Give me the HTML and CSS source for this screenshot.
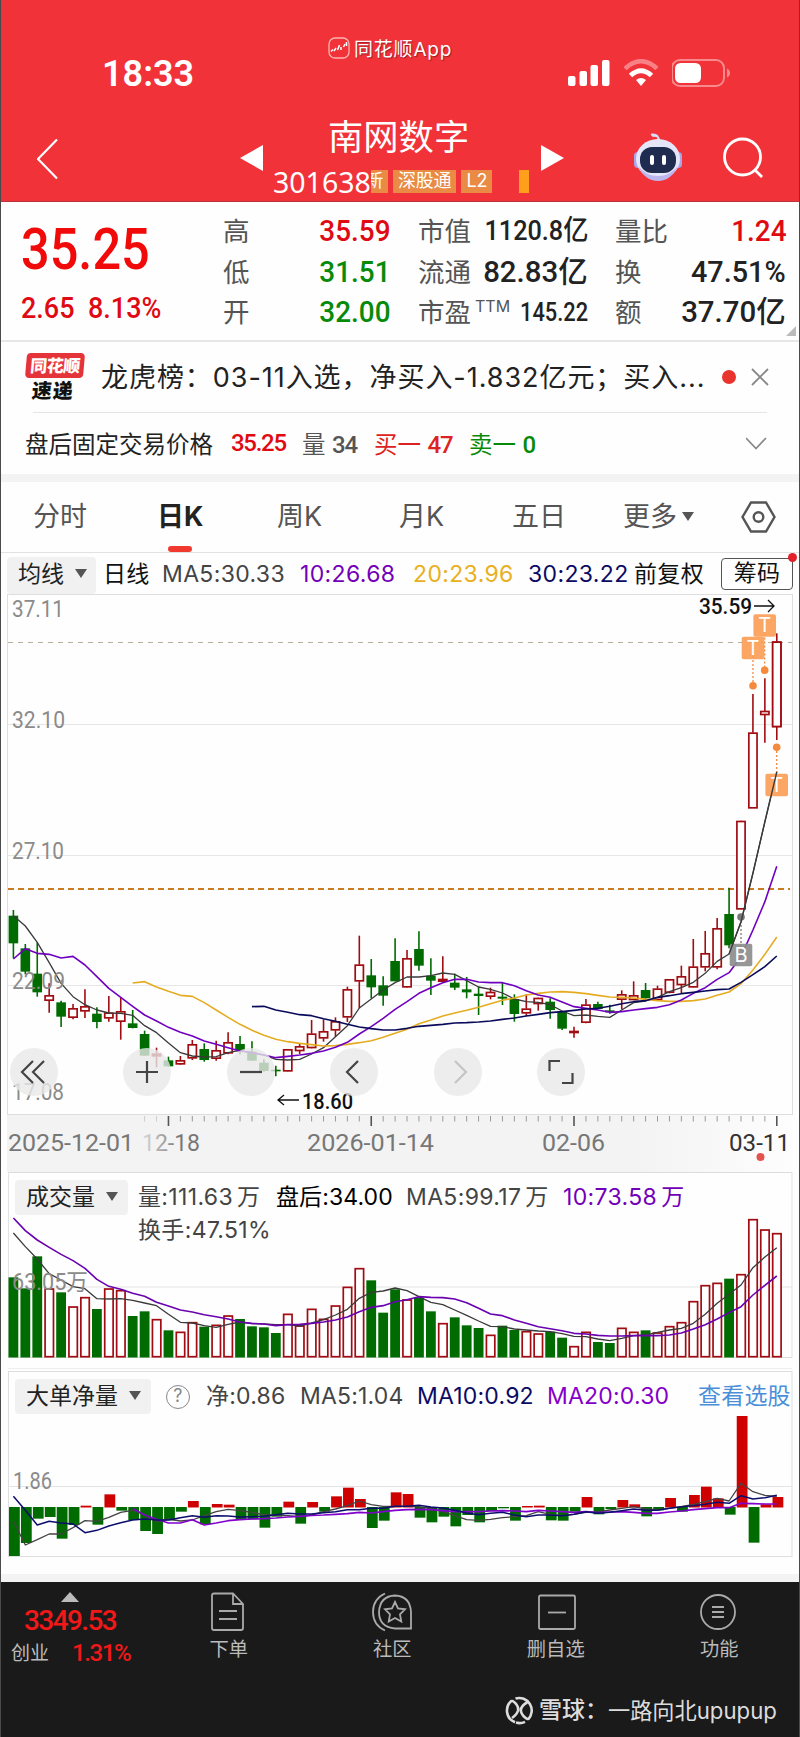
FILE: index.html
```html
<!DOCTYPE html>
<html lang="zh-CN">
<head>
<meta charset="utf-8">
<title>南网数字 301638</title>
<link rel="stylesheet" href="styles.css">
</head>
<body>
<div class="screen">
  <header class="top">
    <div class="status">
      <span class="clock">18:33</span>
      <span class="app">
        <svg width="22" height="22" viewBox="0 0 22 22" fill="none" stroke="#fff"><rect x="1" y="1" width="20" height="20" rx="6" stroke="#ffb3b0" stroke-width="1.3"/><path d="M3 14.500l2-2M6 14l2-3M9.500 13l2-5M13 13v-3M15.500 10l1.500-3M18.500 9V5" stroke-width="1.500"/></svg>
        <span>同花顺App</span>
      </span>
      <span class="signals">
        <svg width="44" height="28" viewBox="0 0 44 28" fill="#fff"><rect x="0" y="17" width="7.500" height="10" rx="2"/><rect x="11.500" y="12" width="7.500" height="15" rx="2"/><rect x="22.500" y="6" width="7.500" height="21" rx="2"/><rect x="34" y="1" width="7.500" height="26" rx="2"/></svg>
        <svg width="36" height="28" viewBox="0 0 36 28" fill="none"><path d="M1 9.500Q17 -5 33 9.500" stroke="#f98084" stroke-width="4.500"/><path d="M6.500 16.500Q17 7 27.500 16.500" stroke="#fff" stroke-width="5"/><path d="M17 27l-5-6q5-4 10 0z" fill="#fff"/></svg>
        <svg width="60" height="28" viewBox="0 0 60 28"><rect x="0" y="1" width="52" height="26" rx="8" fill="none" stroke="#f88a8d" stroke-width="2"/><rect x="3" y="4" width="26" height="20" rx="5.500" fill="#fff"/><path d="M55 9.500q3 1.500 3 4.500t-3 4.500z" fill="#f88a8d"/></svg>
      </span>
    </div>
    <div class="nav">
      <svg width="24" height="42" viewBox="0 0 24 42" fill="none" stroke="#fff" stroke-width="2.200"><path d="M20 1.500L1 21l19 19.500"/></svg>
      <svg class="prev" width="24" height="26" viewBox="0 0 24 26"><path d="M0 13L23 0v26z" fill="#fff"/></svg>
      <div class="name">
        <h1>南网数字</h1>
        <div class="code"><span class="num">301638</span><span class="tag cut"><i>新</i></span><span class="tag">深股通</span><span class="tag">L2</span><span class="tag mark"></span></div>
      </div>
      <svg class="next" width="24" height="26" viewBox="0 0 24 26"><path d="M23 13L0 0v26z" fill="#fff"/></svg>
      <svg class="bot" width="50" height="48" viewBox="0 0 50 48"><path d="M24 8Q26 3 20 4q-4-3-1-3.500 7-1 8 7" fill="#d9dcf6"/><rect x="1" y="19" width="8" height="16" rx="4" fill="#a9a5ea"/><rect x="41" y="19" width="8" height="16" rx="4" fill="#a9a5ea"/><ellipse cx="25" cy="26" rx="22" ry="20" fill="#e6e6fb"/><path d="M5 33q7 15 20 15t20-15q-8 10-20 10T5 33" fill="#bdb5ee"/><rect x="7" y="14" width="36" height="26" rx="12" fill="#202b50"/><rect x="17" y="22" width="4" height="10" rx="2" fill="#fff"/><rect x="29" y="22" width="4" height="10" rx="2" fill="#fff"/></svg>
      <svg class="find" width="42" height="42" viewBox="0 0 42 42" fill="none" stroke="#fff" stroke-width="2.800"><circle cx="20.500" cy="20" r="18"/><path d="M33 33l7 7"/></svg>
    </div>
  </header>

  <section class="quote">
    <div class="price">
      <b class="din big red">35.25</b>
      <div class="change red"><span class="din">2.65</span><span class="din">8.13%</span></div>
    </div>
    <dl>
      <dt>高</dt><dd class="red"><span class="din">35.59</span></dd>
      <dt>低</dt><dd class="green"><span class="din">31.51</span></dd>
      <dt>开</dt><dd class="green"><span class="din">32.00</span></dd>
    </dl>
    <dl class="mid">
      <dt>市值</dt><dd><span class="din s1">1120.8亿</span></dd>
      <dt>流通</dt><dd><span class="din s2">82.83亿</span></dd>
      <dt>市盈<sup>TTM</sup></dt><dd><span class="din s3">145.22</span></dd>
    </dl>
    <dl class="last">
      <dt>量比</dt><dd class="red"><span class="din">1.24</span></dd>
      <dt>换</dt><dd><span class="din s4">47.51%</span></dd>
      <dt>额</dt><dd><span class="din s2">37.70亿</span></dd>
    </dl>
    <i class="corner"></i>
  </section>

  <section class="news">
    <div class="logo"><b>同花顺</b><strong>速递</strong></div>
    <p>龙虎榜：03-11入选，净买入-1.832亿元；买入...</p>
    <i class="dot"></i>
    <svg width="18" height="18" viewBox="0 0 18 18" stroke="#888" stroke-width="1.800"><path d="M1 1l16 16M17 1L1 17"/></svg>
  </section>
  <section class="after">
    <span>盘后固定交易价格</span><span class="red n">35.25</span><span class="gray">量 <em class="n">34</em></span><span class="red2">买一 <em class="n">47</em></span><span class="green">卖一 <em class="n">0</em></span>
    <svg width="22" height="14" viewBox="0 0 22 14" fill="none" stroke="#888" stroke-width="1.700"><path d="M0 2l10 10.500L20 2"/></svg>
  </section>

  <nav class="tabs">
    <span>分时</span><span class="on">日K</span><span>周K</span><span>月K</span><span>五日</span><span>更多<i class="tri"></i></span>
    <svg width="36" height="32" viewBox="0 0 36 32" fill="none" stroke="#555" stroke-width="2.400"><path d="M10 1.500h15L33.500 16 25 30.500H10L1.500 16z"/><circle cx="17.500" cy="16" r="4.800"/></svg>
  </nav>

  <section class="ma">
    <span class="drop">均线<i class="tri"></i></span><span class="black">日线</span><span>MA5:30.33</span><span class="purple">10:26.68</span><span class="gold">20:23.96</span><span class="navy">30:23.22</span><span class="black">前复权</span><span class="chip">筹码<i></i></span>
  </section>

  <section class="kchart">
    <svg id="k" width="798" height="578" viewBox="1 594 798 578"></svg>
    <div class="tools">
      <button><svg viewBox="0 0 48 48"><path d="M23 13L12 24l11 11M34 13L23 24l11 11"/></svg></button>
      <button><svg viewBox="0 0 48 48"><path d="M13 24h22M24 13v22"/></svg></button>
      <button><svg viewBox="0 0 48 48"><path d="M13 24h22"/></svg></button>
      <button><svg viewBox="0 0 48 48"><path d="M28 13L17 24l11 11"/></svg></button>
      <button class="off"><svg viewBox="0 0 48 48"><path d="M21 13l11 11-11 11"/></svg></button>
      <button><svg viewBox="0 0 48 48"><path d="M12.500 23V13H23M25 35h10.500V25"/></svg></button>
    </div>
  </section>

  <section class="vol">
    <div class="head">
      <span class="drop">成交量<i class="tri"></i></span><span>量:111.63<i class="unit">万</i></span><span class="black">盘后:34.00</span><span>MA5:99.17<i class="unit">万</i></span><span class="purple">10:73.58<i class="unit">万</i></span><span class="turn">换手:47.51%</span>
    </div>
    <svg id="v" width="798" height="199" viewBox="1 1172 798 199"></svg>
  </section>

  <section class="net">
    <div class="head">
      <span class="drop">大单净量<i class="tri"></i></span><span class="help">?</span><span>净:0.86</span><span>MA5:1.04</span><span class="navy">MA10:0.92</span><span class="violet">MA20:0.30</span><span class="link">查看选股</span>
    </div>
    <svg id="n" width="798" height="211" viewBox="1 1371 798 211"></svg>
  </section>

  <footer>
    <div class="menu">
      <div class="index">
        <i class="up"></i>
        <span class="pts">3349.53</span>
        <div><span>创业</span><span class="pct">1.31%</span></div>
      </div>
      <div class="item"><svg width="40" height="40" viewBox="0 0 40 40"><path d="M3 3.500q0-2 2-2h19l10 10.500v24q0 2-2 2H5q-2 0-2-2zM24 1.500V12h10M10 19h18M10 27h18"/></svg>下单</div>
      <div class="item"><svg width="42" height="40" viewBox="0 0 42 40"><path d="M14 1.500Q2 7 2 20t12 18.500M40 36.500H24Q8 35 8 20 9 4 24 3.500q15 .5 16 16.500zM24 10l3 6.500 7 .8-5 5 1.300 7.200-6.300-3.500-6.300 3.500 1.300-7.200-5-5 7-.8z"/></svg>社区</div>
      <div class="item"><svg width="40" height="40" viewBox="0 0 40 40"><rect x="3" y="3.500" width="36" height="33.500" rx="1.500"/><path d="M12 20.500h18"/></svg>删自选</div>
      <div class="item"><svg width="38" height="40" viewBox="0 0 38 40"><circle cx="18" cy="20" r="17"/><path d="M12 15h12M12 20h12M12 25h12"/></svg>功能</div>
    </div>
    <div class="credit">
      <svg width="29" height="29" viewBox="0 0 29 29" fill="none" stroke="#ddd" stroke-width="2.600"><path d="M10 26.300A12.600 12.600 0 0 1 7 4.500M10.500 2.500A12.600 12.600 0 0 1 23 23.500M20 25.800a12.600 12.600 0 0 1-9 .8M7 4.500q7 4.500 6 10-1 4-6 7.500M22 6.500q-7 4-6 9 1 4.500 7 8"/></svg>
      <span>雪球：</span><span class="user">一路向北upupup</span>
    </div>
  </footer>
</div>
<script src="chart.js"></script>
</body>
</html>
```
FILE: styles.css
```css
* { box-sizing: border-box; }
body { margin: 0; background: #fff; font-family: Inter, "Noto Sans CJK SC", sans-serif; color: #444; }
.screen { width: 800px; height: 1737px; border: solid #4a4a4a; border-width: 0 1px; background: #fefefe; white-space: nowrap; overflow: hidden; }
svg { display: block; flex: none; }
i, em { font-style: normal; }
.red { color: #e00a12; }
.green { color: #078a07; }
.purple { color: #7200b8; }
.violet { color: #8400c8; }
.gold { color: #e8b020; }
.navy { color: #0b0b64; }
.black { color: #111; }

.top { height: 202px; background: #f13239; color: #fff; border-bottom: 1px solid #b8323a; }
.status { display: grid; grid-template-columns: 327px 240px 1fr; height: 104px; padding-top: 37px; }
.clock { font: 600 36px/42px Roboto, sans-serif; padding: 16px 0 0 101px; }
.app { display: flex; gap: 4px; font-size: 19px; letter-spacing: .8px; line-height: 26px; align-items: flex-start; text-shadow: 1px 1px 1px #9c1c22; }
.signals { display: flex; gap: 12px; padding-top: 22px; }
.nav { display: grid; grid-template-columns: 203px 33px 268px 92px 89px 1fr; padding: 15px 0 0 36px; align-items: start; }
.nav > svg { margin-top: 19px; }
.nav > .prev, .nav > .next { margin-top: 26px; }
.nav > .bot { margin-top: 14px; }
.nav > .find { margin-top: 18px; }
h1 { margin: -3px 0 0; font: 400 35.300px/38px "Noto Sans CJK SC", sans-serif; padding-left: 55px; }
.code { display: flex; align-items: center; gap: 5px; height: 27px; margin-top: 14px; }
.num { font: 400 28.500px/26px "Noto Sans", sans-serif; width: 93px; }
.tag { height: 23px; line-height: 22px; font-size: 18px; padding: 0 5px; background: #e98b45; letter-spacing: -.2px; }
.cut { width: 17px; padding: 0; overflow: hidden; display: flex; justify-content: flex-end; padding-right: 5px; }
.mark { width: 10px; padding: 0; margin-left: 22px; background: #ffa01c; }

.quote { position: relative; display: grid; grid-template-columns: 222px 168px 197px 1fr; height: 140px; border-bottom: 2px solid #e7e7e7; padding-right: 13px; }
.din { display: inline-block; font: 500 30px/40px Roboto, "Noto Sans CJK SC", sans-serif; transform: scaleX(.93); transform-origin: right; }
.price { padding: 17px 0 0 20px; }
.price .din { transform-origin: left; }
.price .big { display: block; font-size: 58px; line-height: 60px; transform: scaleX(.87); color: #f00a0a; }
.change { display: grid; grid-template-columns: 67px 1fr; }
.change .din { font-size: 29px; transform: scaleX(.93); line-height: 60px; margin-top: -1px; }
dl { margin: 0; padding-top: 9px; display: grid; grid-template-columns: 0 1fr; grid-auto-rows: 40.5px; }
dt { font-size: 26.500px; line-height: 40px; color: #555; }
dd { margin: 0; text-align: right; }
.mid { margin-left: 27px; }
.last { margin-left: 27px; }
.mid dd, .last dd:not(.red) { color: #222; }
.quote .s1 { font-size: 28px; transform: scaleX(.9); }
.quote .s2 { font-size: 30px; transform: scaleX(.98); }
.quote .s3 { font-size: 26px; transform: scaleX(.84); }
.quote .s4 { transform: scaleX(.96); }
sup { font-size: 16px; line-height: 10px; vertical-align: 10px; margin-left: 4px; font-weight: 400; }
.corner { position: absolute; right: 3px; bottom: 4px; border-left: 10px solid transparent; border-bottom: 10px solid #bbb; }

.news { display: grid; grid-template-columns: 76px 621px 24px 1fr; align-items: center; height: 70px; margin-left: 24px; }
.news svg { margin-left: 5px; }
.logo { width: 58px; transform: skewX(-5deg); text-align: center; color: #111; }
.logo b { display: block; height: 25px; background: #e4343a; color: #fff; border-radius: 4px; font: 900 17px/24px "Noto Sans CJK SC", sans-serif; letter-spacing: -.5px; }
.logo strong { display: block; font: 900 20px/23px "Noto Sans CJK SC", sans-serif; letter-spacing: 1px; }
.news p { margin: -3px 0 0; font-size: 27px; color: #222; letter-spacing: .95px; }
.dot { width: 14px; height: 14px; border-radius: 50%; background: #e8342c; }
.after { display: grid; grid-template-columns: 206px 71px 72px 95px 277px 1fr; align-items: center; height: 62px; margin-left: 24px; font-size: 23.500px; color: #222; position: relative; }
.after::before { content: ""; position: absolute; left: 8px; right: 32px; top: 0; height: 1px; background: #e4e4e4; }
.red2 { color: #d22; }
.gray { color: #555; }
.after .n { font: 500 24px Roboto, sans-serif; letter-spacing: -1.300px; }

.tabs { display: grid; grid-template-columns: 124px 120px 122px 113px 111px 118px 1fr; height: 79px; padding: 8px 0 0 32px; border-top: 8px solid #f3f3f3; border-bottom: 1px solid #e2e2e2; font-size: 27px; line-height: 53px; color: #555; }
.tabs svg { margin-top: 11px; }
.on { position: relative; color: #222; font-weight: 700; }
.on::after { content: ""; position: absolute; left: 11px; top: 56px; width: 24px; height: 6px; border-radius: 3px; background: #f03a30; }
.tri { display: inline-block; border: 6.500px solid transparent; border-top: 9px solid #555; border-bottom: 0; margin-left: 5px; vertical-align: 5px; }
.ma { display: grid; grid-template-columns: 96px 59px 138px 113px 115px 106px 87px 72px; height: 41px; padding: 4px 0 0 6px; font-size: 23px; line-height: 34px; letter-spacing: .35px; }
.ma .gold, .ma .navy, .ma .purple { margin-left: 0; }
.drop { display: inline-block; background: #f1f1f1; border-radius: 4px; color: #222; padding-left: 11px; }
.ma .drop { width: 89px; letter-spacing: 0; }
.drop .tri { margin-left: 11px; vertical-align: 4px; }
.chip { position: relative; border: 1.500px solid #555; border-radius: 4px; height: 32px; line-height: 28px; margin-top: 1px; text-align: center; color: #111; }
.chip i { position: absolute; right: -5px; top: -6px; width: 9px; height: 9px; border-radius: 50%; background: #e0202a; }

.kchart { position: relative; height: 578px; }
.tools { position: absolute; left: 9px; top: 454px; display: flex; gap: 55.400px; }
.tools button { width: 48px; height: 48px; padding: 0; border: 0; border-radius: 50%; background: rgba(232,232,232,.8); }
.tools button:first-child { margin-right: 10px; }
.tools path { fill: none; stroke: #444; stroke-width: 2.200; }
.tools .off path { stroke: #c4c4c4; }

.vol, .net { position: relative; }
.vol { height: 199px; }
.net { height: 211px; }
.head { position: absolute; left: 14px; top: 8px; display: grid; line-height: 35px; font-size: 23px; }
.vol .head { grid-template-columns: 123px 138px 130px 157px 1fr; grid-auto-rows: 35px 29px; letter-spacing: .35px; }
.vol .drop { width: 113px; letter-spacing: 0; }
.vol .black { letter-spacing: .1px; color: #000; }
.unit { margin-left: 4px; }
.turn { grid-column: 2; line-height: 31px; }
.net .head { grid-template-columns: 151px 40px 94px 117px 130px 151px 1fr; letter-spacing: .2px; }
.net .drop { width: 136px; letter-spacing: 0; }
.help { width: 24px; height: 24px; margin-top: 6px; border: 1.600px solid #888; border-radius: 50%; font-size: 18px; line-height: 20px; text-align: center; color: #888; }
.link { color: #4a8fd8; }

footer { height: 156px; background: #1a1a1a; color: #bbb; }
.menu { display: grid; grid-template-columns: 146px repeat(4, 163.500px); height: 100px; padding-top: 10px; }
.index { display: flex; flex-direction: column; padding-left: 10px; }
.up { width: 0; border: 9px solid transparent; border-top: 0; border-bottom: 10px solid #bbb; margin-left: 50px; }
.pts { font: 500 28px/38px Roboto, sans-serif; color: #f01818; padding-left: 13px; letter-spacing: -1.600px; }
.index div { display: grid; grid-template-columns: 61px 1fr; font-size: 19px; line-height: 28px; }
.pct { font: 500 24px/27px Roboto, sans-serif; color: #f01818; letter-spacing: -1.400px; }
.item { display: flex; flex-direction: column; align-items: center; gap: 3px; font-size: 19.300px; line-height: 28px; }
.item svg { fill: none; stroke: #aaa; stroke-width: 1.800; }
.credit { display: grid; grid-template-columns: 34px 69px 1fr; align-items: center; padding: 14px 0 0 504px; color: #ddd; font-size: 23px; line-height: 29px; }
.credit span { font-weight: 500; }
.credit .user { font-weight: 400; font-size: 22.200px; }
```
FILE: chart.js
```js
const STEP = 11.928, X0 = 13.4;
const GREEN = '#006b00', RED = '#a00c12';
const cx = i => X0 + STEP * i;

// Values are stored in thirds of a pixel, each block with its own origin.
const px = (v, base) => base + v / 3;

const rect = (x, y, w, h, fill, stroke) =>
  `<rect x="${x}" y="${y}" width="${w}" height="${h}" fill="${fill}"${stroke ? ` stroke="${stroke}" stroke-width="1.700"` : ''}/>`;
const seg = (x1, y1, x2, y2, c, w = 1, dash = '') =>
  `<path d="M${x1} ${y1}L${x2} ${y2}" stroke="${c}" stroke-width="${w}" stroke-dasharray="${dash}" fill="none"/>`;
const line = (start, ys, color, w = 1.4) =>
  `<polyline points="${ys.map((y, k) => cx(start + k) + ',' + y).join(' ')}" fill="none" stroke="${color}" stroke-width="${w}" stroke-linejoin="round"/>`;
const label = (t, x, y, len, color = '#8b8b8b', size = 23, weight = 400) =>
  `<text x="${x}" y="${y}" textLength="${len}" lengthAdjust="spacingAndGlyphs" fill="${color}" font-size="${size}" font-weight="${weight}" font-family="Roboto, 'Noto Sans CJK SC', sans-serif">${t}</text>`;
const list = (text, base) => text.trim().split(/[\s,]+/).map(v => px(+v, base));

// Daily candles: high, body top, body bottom, low, direction
const early = `90,107,190,235,G 192,205,275,283,G 187,281,337,350,G 310,346,362,398,R 362,367,410,441,G 372,385,413,418,R 328,379,394,414,R 382,401,426,445,G 348,398,415,425,R 352,394,425,479,R 390,430,444,445,G 452,462,527,527,G 503,521,529,562,R 530,541,559,560,G 528,541,553,555,R 480,493,535,540,R 490,507,540,545,G 482,511,536,542,R 457,487,520,523,R 468,492,510,523,G 484,515,542,543,G 538,548,573,575,G 557,569,574,589,G 507,508,574,575,R 490,499,513,522,R 420,461,504,505,R 418,454,475,485,R 412,424,451,470,R 320,328,412,426,R 167,254,304,385,R 237,286,322,355,G 289,316,347,377,G 175,243,304,304,G`;
const late = `450,475,562,563,R 394,447,497,512,G 475,527,542,585,G 469,537,545,545,R 521,548,563,570,G 531,568,577,595,G 560,581,588,645,G 563,576,590,598,R 547,590,596,615,G 583,597,642,665,G 583,626,640,648,R 593,594,612,632,R 595,605,630,656,G 634,636,686,690,G 680,693,699,713,R 597,614,668,670,R 605,612,627,628,G 614,631,637,641,G 571,583,599,628,R 544,586,600,600,R 549,570,595,596,G 557,566,600,601,R 538,538,578,580,R 497,529,555,580,R 417,500,562,563,R 393,460,502,514,R 354,385,502,508,R 263,342,436,445,G 62,63,328,328,R -318,-202,25,25,R -365,-267,-255,-172,R -500,-475,-219,-180,R`;
const candles = [];
for (const [src, base] of [[early, 880], [late, 800]])
  for (const c of src.split(' ')) {
    const p = c.split(',');
    candles.push({ v: p.slice(0, 4).map(n => px(+n, base)), up: p[4] === 'R' });
  }

function drawK() {
  let s = rect(7, 1115, 785, 57, 'url(#axis)');
  s = `<defs><linearGradient id="axis"><stop offset=".8" stop-color="#f3f3f3"/><stop offset="1" stop-color="#fdfdfd"/></linearGradient><linearGradient id="fade" gradientUnits="userSpaceOnUse" x1="140" x2="180" y1="0" y2="0"><stop offset="0" stop-color="#777" stop-opacity=".15"/><stop offset="1" stop-color="#777"/></linearGradient></defs>` + s;
  s += `<rect x="7.500" y="594.500" width="785" height="520" fill="none" stroke="#dedede"/>`;
  for (const y of [724.5, 855.5, 985.5]) s += seg(8, y, 792, y, '#e6e6e6');
  s += seg(8, 642.5, 792, 642.5, '#b9ad9c', 1, '5 5') + seg(8, 889, 790, 889, '#cc7a20', 1.8, '6 4');
  candles.forEach(({ v: [h, t, b, l], up }, i) => {
    const x = cx(i), c = up ? RED : GREEN;
    s += seg(x, h, x, up ? t : l, c, 1.6);
    if (up) s += seg(x, b, x, l, c, 1.6) + rect(x - 4.1, t + .5, 8.2, Math.max(b - t - 1, .8), '#fff', c);
    else s += rect(x - 4.8, t, 9.6, b - t, GREEN);
  });
  s += line(0, [...list('107 138 187 248 310 350 374 390 399 400 406 437 458 489 518 528 531 530 518 511 518 525 538 540 538 522 503 470 437 384 357 330 308', 880), ...list('531 531 527 519 523 542 561 568 579 597 605 607 614 633 647 645 649 652 630 608 603 592 575 563 547 520 484 462 365 220 65 -85', 800)], '#3a3a3a', 1.3);
  s += line(10, [...list('309 305 321 334 346 349 368 390 412 433 451 466 478 485 490 494 498 497 493 488 482 472 460', 880), ...list('688 671 660 648 639 631 622 611 601 594 585 580 576 575 577 581 586 591 592 594 598 602 604 604 602 597 586 576 551 510 463 411', 800)], '#e5ac22', 1.6);
  s += line(0, [...list('237 206 220 223 234 229 255 290 325 352 379 405 423 442 457 468 483 493 503 513 518 525 533 529 525 520 513 502 487 462 440 415 388', 880), ...list('605 580 563 548 538 538 546 548 548 557 572 585 592 606 620 625 630 637 635 630 626 622 614 600 580 563 538 518 470 390 305 199', 800)], '#7000c0', 1.6);
  s += line(20, [...list('380 379 390 397 404 407 416 424 433 441 446 450 450', 880), ...list('685 679 676 673 669 668 666 663 658 654 648 643 638 635 631 627 625 619 611 605 602 592 587 581 577 573 569 567 547 524 500 468', 800)], '#0a0a5a', 1.6);

  const flag = (x, y, dot, t, c, dc) => seg(x, y, x, dot, dc, 1.3, '2 2') +
    `<circle cx="${x}" cy="${dot}" r="3.800" fill="${dc}"/><rect x="${x - 11.3}" y="${y - 11.3}" width="22.600" height="22.600" rx="2" fill="${c}" fill-opacity=".92"/>` +
    `<text x="${x}" y="${y + 6.5}" text-anchor="middle" fill="#fff" font-size="20" font-family="Inter, sans-serif">${t}</text>`;
  s += flag(753, 648, 685.7, 'T', '#fb9e58', '#f58a3c') + flag(764.7, 625.5, 670.3, 'T', '#fb9e58', '#f58a3c') + flag(776.7, 785, 747.3, 'T', '#fb9e58', '#f58a3c') + flag(741, 955, 917, 'B', '#8d8d8d', '#777');
  const last = candles[64].v;
  s += rect(cx(64) - 4.1, last[1] + .5, 8.2, last[2] - last[1] - 1, '#fff', RED);
  s += `<path d="M${cx(61)} 922L${cx(62)} 873L${cx(63)} 822L${cx(64)} 772M${cx(60)} 954L${cx(61)} 922" fill="none" stroke="#3a3a3a" stroke-width="1.300"/>`;

  s += label('37.11', 12, 617, 52) + label('32.10', 12, 728, 53) + label('27.10', 12, 859, 52) + label('22.09', 12, 989, 53) + label('17.08', 12, 1100, 52);
  s += label('35.59', 699, 614, 53, '#111', 22, 500) + `<path d="M754 606h20m-6-6l6 6-6 6" fill="none" stroke="#111" stroke-width="1.300"/>`;
  s += label('18.60', 302, 1109, 51, '#111', 22, 500) + `<path d="M299 1100h-21m6-5l-6 5 6 5" fill="none" stroke="#111" stroke-width="1.300"/>`;
  for (let i = 11; i < 65; i++) {
    const major = [13, 30, 47, 64].includes(i);
    s += seg(cx(i), 1116, cx(i), major ? 1126 : 1121.5, major ? '#555' : i < 13 ? '#ccc' : '#999', major ? 1.6 : 1);
  }
  s += label('2025-12-01', 8, 1151, 126, '#777') + label('12-18', 142, 1151, 58, 'url(#fade)') + label('2026-01-14', 307, 1151, 127, '#777') + label('02-06', 542, 1151, 63, '#777') + label('03-11', 729, 1151, 61, '#333');
  s += '<circle cx="760.500" cy="1157" r="4" fill="#e4524f"/>';
  document.getElementById('k').innerHTML = s;
}

function drawVolume() {
  const tops = '352G 385G 289G 385R 397G 439R 411R 447G 385R 390R 468G 454G 477R 511G 515R 486R 500G 494R 466R 477G 499G 502G 519G 461R 496R 446R 476R 436R 380R 324R 361G 458G 388G 418R 413G 454G 489R 472G 496G 504G 524R 497G 510G 513R 520R 515G 533G 558R 515R 546G 549G 503R 515R 511G 517R 498R 486R 423R 375R 368R 356G 342R 177R 208R 219R'.split(' ');
  let s = seg(8, 1172.500, 792, 1172.500, '#dcdcdc') + seg(8.500, 1172, 8.500, 1358, '#e2e2e2') + seg(792, 1172, 792, 1358, '#e2e2e2') + seg(8, 1357.500, 792, 1357.500, '#dcdcdc') + seg(8, 1287, 792, 1287, '#e4e4e4') + seg(8, 1368.500, 792, 1368.500, '#ededed');
  tops.forEach((t, i) => {
    const y = px(parseInt(t), 1160), x = cx(i);
    s += t.endsWith('G') ? rect(x - 4.9, y, 9.8, 1357.5 - y, GREEN) : rect(x - 4.1, y + .7, 8.4, 1356 - y, '#fff', RED);
  });
  s += line(0, list('219 260 297 341 360 380 386 416 417 416 421 429 437 463 487 489 497 502 493 486 491 492 494 494 498 489 479 465 448 415 397 393 384 392 410 427 434 450 466 483 499 500 507 510 513 515 521 529 530 537 542 535 527 525 517 510 505 490 463 430 403 375 323 291 263', 1160), '#3a3a3a', 1.3);
  s += line(0, list('174 212 240 262 283 302 325 358 379 388 400 409 427 438 450 456 464 470 477 486 490 492 497 494 493 490 486 480 471 455 442 437 425 419 410 412 413 417 428 445 462 467 480 490 500 506 512 520 522 526 528 528 527 527 527 525 519 507 494 477 458 440 405 376 348', 1160), '#6a00b0', 1.6);
  s += label('63.05万', 12, 1290, 76);
  document.getElementById('v').innerHTML = s;
}

function drawNet() {
  const ends = '573 534 461 456 521 480 422 479 388 437 465 498 507 466 440 408 478 417 419 464 463 488 455 410 476 411 440 394 368 402 489 467 382 387 458 472 455 484 450 472 438 430 467 423 422 466 467 440 396 448 432 405 418 454 436 399 440 390 365 400 449 153 533 418 396'.split(' ');
  let s = `<rect x="8.500" y="1371.500" width="783.500" height="185" fill="none" stroke="#dedede"/>` + seg(8, 1486.500, 792, 1486.500, '#e4e4e4') + rect(1, 1574, 798, 8, '#f3f3f3');
  ends.forEach((e, i) => {
    const up = +e < 426, y = px(+e, 1365), x = 9 + 11.93 * i;
    s += up ? rect(x, y, 10.8, 1507.5 - y, '#cf0000') : rect(x, 1507, 10.8, y - 1507, GREEN);
  });
  s += line(0, list('468 540 524 507 507 488 467 469 457 442 436 450 470 462 468 465 452 440 433 437 442 450 450 452 455 450 440 432 422 408 419 424 424 424 425 430 440 452 464 466 463 458 455 452 440 448 452 448 442 441 435 430 425 432 434 430 425 418 410 400 408 355 380 391 394', 1365), '#444', 1.3);
  s += line(10, list('430 450 463 474 474 464 480 474 467 464 462 461 459 456 454 451 450 448 446 442 444 440 436 434 433 434 437 440 440 440 438 437 438 440 436 438 440 442 440 443 441 440 442 445 445 441 438 434 431 428 428 415 416 417 417', 1365), '#8200cc', 1.6);
  s += line(0, list('394 436 480 469 474 477 503 496 483 473 465 462 465 465 458 452 457 452 453 456 455 454 449 445 447 447 443 440 434 434 430 430 424 424 421 426 429 436 444 449 445 442 450 455 450 450 452 448 440 445 442 437 432 436 436 430 425 422 418 412 415 392 402 398 391', 1365), '#0d0d6e', 1.5);
  s += label('1.86', 13, 1489, 39);
  document.getElementById('n').innerHTML = s;
}

drawK();
drawVolume();
drawNet();
```
